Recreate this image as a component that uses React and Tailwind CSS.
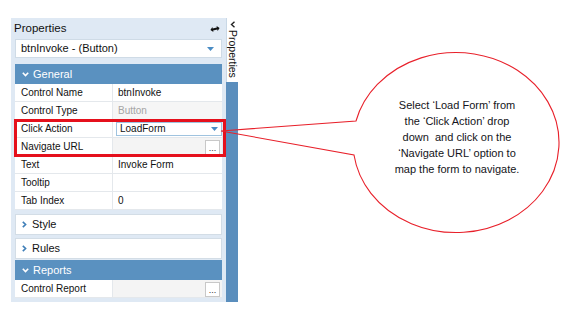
import React from 'react';

const GENERAL_ROWS = [
  { label: 'Control Name', value: 'btnInvoke' },
  { label: 'Control Type', value: 'Button', muted: true },
  { label: 'Click Action', value: 'LoadForm', select: true },
  { label: 'Navigate URL', value: '', browse: true },
  { label: 'Text', value: 'Invoke Form' },
  { label: 'Tooltip', value: '' },
  { label: 'Tab Index', value: '0' },
];

function ChevronDown() {
  return (
    <svg width="7" height="5" viewBox="0 0 7 5" className="shrink-0">
      <path d="M0.8 0.8 L3.5 3.6 L6.2 0.8" fill="none" stroke="white" strokeWidth="1.6" />
    </svg>
  );
}

function ChevronRight() {
  return (
    <svg width="5" height="7" viewBox="0 0 5 7" className="shrink-0">
      <path d="M0.8 0.8 L3.6 3.5 L0.8 6.2" fill="none" stroke="#3f7fb8" strokeWidth="1.6" />
    </svg>
  );
}

function Caret() {
  return (
    <svg width="7" height="4" viewBox="0 0 7 4" className="shrink-0">
      <path d="M0 0 L7 0 L3.5 4 Z" fill="#4a8cc4" />
    </svg>
  );
}

function BrowseButton() {
  return (
    <div className="w-[15px] h-[15px] bg-white border border-[#c8c8c8] flex items-end justify-center text-[9px] leading-[9px] text-[#333] pb-[1px]">
      ...
    </div>
  );
}

function PropRow({ row }) {
  return (
    <div className="grid grid-cols-[98px_1fr] h-[18px] bg-white border-b border-[#e4e8ec] text-[10px]">
      <div className="pl-[6px] flex items-center text-[#111] border-r border-[#e4e8ec]">{row.label}</div>
      {row.select ? (
        <div className="flex items-center pl-[3px]">
          <div className="flex-1 h-[14px] border border-[#9fc3df] bg-white flex items-center justify-between pl-[3px] pr-[3px]">
            <span className="text-[#111]">{row.value}</span>
            <Caret />
          </div>
        </div>
      ) : row.browse ? (
        <div className="flex items-end justify-end bg-[#f4f4f4] pr-[2px]">
          <BrowseButton />
        </div>
      ) : (
        <div className={`flex items-center pl-[5px] ${row.muted ? 'text-[#a5a5a5] bg-[#f6f6f6]' : 'text-[#111]'}`}>
          {row.value}
        </div>
      )}
    </div>
  );
}

function SectionHeader({ title }) {
  return (
    <div className="h-[20px] bg-[#5a91c0] text-white text-[11px] flex items-center pl-[7px] gap-[4px]">
      <ChevronDown />
      <span>{title}</span>
    </div>
  );
}

function CollapsedSection({ title }) {
  return (
    <div className="h-[21px] bg-white border border-[#d3dde6] text-[11px] text-[#111] flex items-center pl-[6px] gap-[5px]">
      <ChevronRight />
      <span>{title}</span>
    </div>
  );
}

export default function App() {
  return (
    <div className="w-[574px] h-[316px] bg-white relative overflow-hidden font-['Liberation_Sans',Arial,sans-serif]">
      <div className="flex pl-[11px] pt-[18px]">
        <div className="w-[215px] h-[284px] bg-[#dfe9f4] px-[4px] flex flex-col">
          <div className="h-[21px] flex items-center justify-between -ml-px pr-[2px]">
            <span className="text-[11.5px] text-[#111]">Properties</span>
            <svg width="10" height="6" viewBox="0 0 11 7" className="-rotate-12">
              <path d="M0 3.5 L3 0.5 L3 2.3 L8 2.3 L8 0.5 L11 3.5 L8 6.5 L8 4.7 L3 4.7 L3 6.5 Z" fill="#111" />
            </svg>
          </div>
          <div className="h-[19px] bg-white border border-[#cfdbe6] flex items-center justify-between pl-[5px] pr-[7px] text-[11px] text-[#111]">
            <span>btnInvoke - (Button)</span>
            <Caret />
          </div>
          <div className="mt-[6px]">
            <SectionHeader title="General" />
            {GENERAL_ROWS.map((row) => (
              <PropRow key={row.label} row={row} />
            ))}
          </div>
          <div className="mt-[4px]">
            <CollapsedSection title="Style" />
          </div>
          <div className="mt-[3px]">
            <CollapsedSection title="Rules" />
          </div>
          <div className="mt-[1px]">
            <SectionHeader title="Reports" />
            <div className="grid grid-cols-[98px_1fr] h-[18px] bg-white border-b border-[#e4e8ec] text-[10px]">
              <div className="pl-[6px] flex items-center text-[#111] border-r border-[#e4e8ec]">Control Report</div>
              <div className="flex items-end justify-end bg-[#f4f4f4] pr-[2px]">
                <BrowseButton />
              </div>
            </div>
          </div>
        </div>
        <div className="w-[12px] h-[284px] flex flex-col">
          <div className="h-[64px] bg-white border-l border-[#c9d8e6] flex flex-col items-center pt-[3px]">
            <svg width="6" height="7" viewBox="0 0 6 7">
              <path d="M4.5 0.8 L1.5 3.5 L4.5 6.2" fill="none" stroke="#222" strokeWidth="1.4" />
            </svg>
            <span className="[writing-mode:vertical-rl] text-[10.5px] leading-[11px] text-[#111] mt-[2px]">Properties</span>
          </div>
          <div className="flex-1 bg-[#5a8ebd]" />
        </div>
      </div>

      <div className="absolute left-[14px] top-[119px] w-[212px] h-[38px] border-[3px] border-[#e5101c]" />

      <svg className="absolute left-0 top-0 pointer-events-none" width="574" height="316" viewBox="0 0 574 316">
        <path
          d="M356 121 A103 90 0 1 1 354 155 L221 131 Z"
          fill="none"
          stroke="#e8202a"
          strokeWidth="1.1"
        />
      </svg>

      <div className="absolute left-[372px] top-[97px] w-[170px] text-center text-[11px] leading-[16px] text-[#141420]">
        Select ‘Load Form’ from<br />
        the ‘Click Action’ drop<br />
        down&nbsp; and click on the<br />
        ‘Navigate URL’ option to<br />
        map the form to navigate.
      </div>
    </div>
  );
}
